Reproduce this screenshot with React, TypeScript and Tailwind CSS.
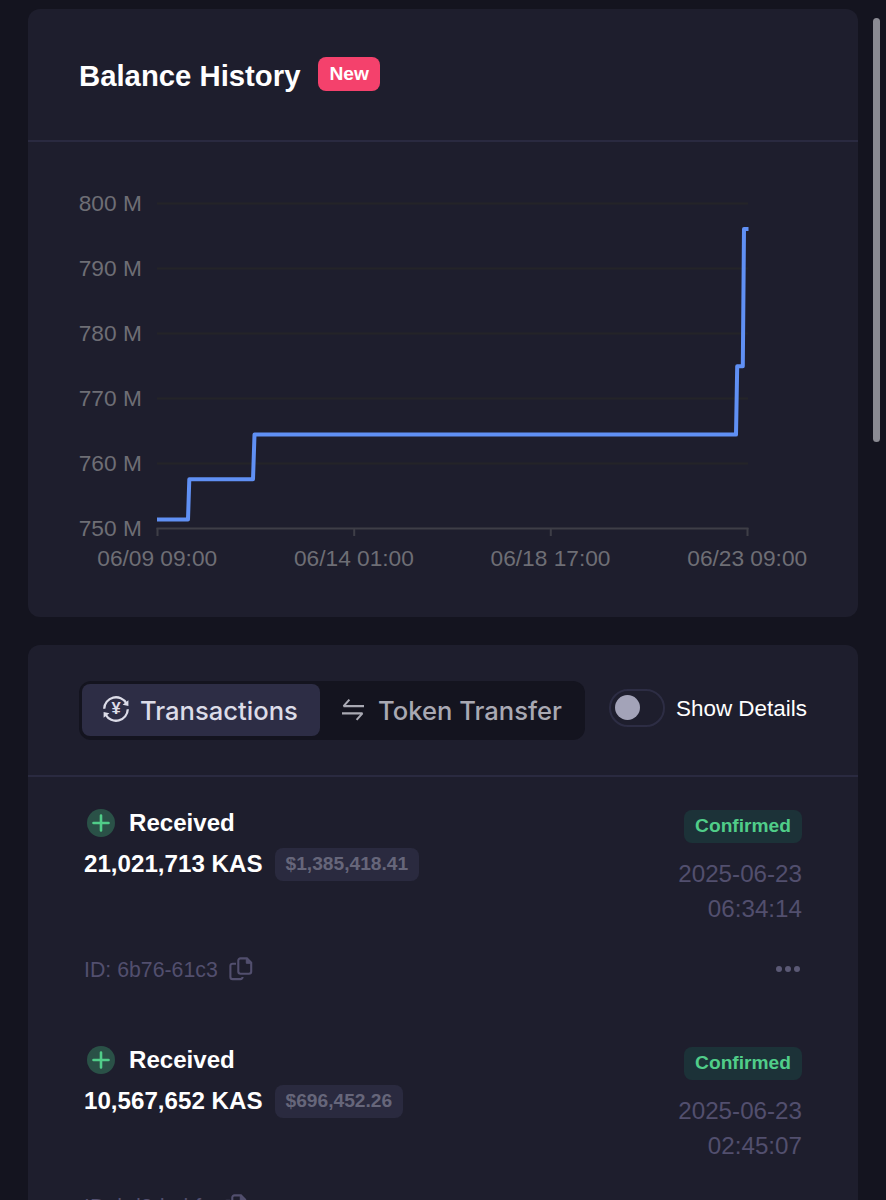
type Transaction = {
  amount: string;
  usd: string;
  date: string;
  time: string;
  id: string;
};

const transactions: Transaction[] = [
  { amount: "21,021,713 KAS", usd: "$1,385,418.41", date: "2025-06-23", time: "06:34:14", id: "6b76-61c3" },
  { amount: "10,567,652 KAS", usd: "$696,452.26", date: "2025-06-23", time: "02:45:07", id: "bd3d-abfc" },
];

const yTicks = [
  { label: "800 M", y: 61 },
  { label: "790 M", y: 126 },
  { label: "780 M", y: 191 },
  { label: "770 M", y: 256 },
  { label: "760 M", y: 321 },
  { label: "750 M", y: 386 },
];

const xTicks = [
  { label: "06/09 09:00", x: 129.5 },
  { label: "06/14 01:00", x: 326.2 },
  { label: "06/18 17:00", x: 522.8 },
  { label: "06/23 09:00", x: 719.5 },
];

function BalanceChart() {
  return (
    <svg width="830" height="475" viewBox="0 0 830 475" className="block" fontFamily="Liberation Sans, sans-serif">
      {yTicks.map(({ label, y }) => (
        <g key={label}>
          {label !== "750 M" && <path d={`M129 ${y + 0.5}H720`} stroke="#242428" strokeWidth="2" />}
          <text x="113.8" y={y + 8.2} textAnchor="end" fontSize="22.7" fill="#6e6e75">
            {label}
          </text>
        </g>
      ))}
      <path d="M128.5 386.5H720.5" stroke="#3e3e47" strokeWidth="2" />
      {xTicks.map(({ label, x }) => (
        <g key={label}>
          <path d={`M${x} 386V394`} stroke="#3e3e47" strokeWidth="2" />
          <text x={x - 0.3} y="424" textAnchor="middle" fontSize="22.7" fill="#6e6e75">
            {label}
          </text>
        </g>
      ))}
      <path
        d="M129 377.4H160L161.3 337.3H225L226.5 292.6H708L709.2 224.2H714.8L716 87H720.5"
        fill="none"
        stroke="#6090f4"
        strokeWidth="4"
        strokeLinejoin="round"
      />
    </svg>
  );
}

function ExchangeIcon() {
  return (
    <svg width="28" height="28" viewBox="0 0 28 28" fill="none" stroke="currentColor" strokeWidth="2.3">
      <path d="M2.2 13.7A11.8 11.8 0 0 1 24.3 8.3M25.8 14.3A11.8 11.8 0 0 1 3.7 19.7" />
      <path d="M26.4 5.2V11L20.6 9.8ZM1.6 22.8V17L7.4 18.2Z" fill="currentColor" stroke="none" />
      <text
        x="14"
        y="19.4"
        textAnchor="middle"
        fontFamily="Liberation Sans, sans-serif"
        fontSize="16.5"
        fontWeight="700"
        fill="currentColor"
        stroke="none"
      >
        ¥
      </text>
    </svg>
  );
}

function TransferIcon() {
  return (
    <svg width="24" height="24" viewBox="0 0 24 24" fill="none" stroke="currentColor" strokeWidth="2.1">
      <path d="M8.4 1.6 2.6 8.1H23M1 15.4H21.4L15.6 21.9" strokeLinejoin="bevel" />
    </svg>
  );
}

function CopyIcon() {
  return (
    <svg width="24" height="24" viewBox="0 0 24 24" fill="none" stroke="currentColor" strokeWidth="2.1">
      <path d="M7 6.7H3.6a2.2 2.2 0 0 0-2.2 2.2v11a2.2 2.2 0 0 0 2.2 2.2h7.8a2.2 2.2 0 0 0 2.2-2.2" />
      <path d="M11.5 1.4h6.4l4.3 4.3v8.8a2.2 2.2 0 0 1-2.2 2.2h-8.5a2.2 2.2 0 0 1-2.2-2.2V3.6a2.2 2.2 0 0 1 2.2-2.2Z" />
      <path d="M17.3 1.8v4.5h4.5Z" fill="currentColor" strokeWidth="1" />
    </svg>
  );
}

function TransactionRow({ tx }: { tx: Transaction }) {
  return (
    <div className="flex h-[237.3px] justify-between pr-14 pl-14">
      <div>
        <div className="flex h-[42px] items-center pl-[3px] text-[24.1px] font-bold text-white">
          <svg width="28" height="28" viewBox="0 0 28 28" className="mr-[14px]">
            <circle cx="14" cy="14" r="14" fill="#2a5147" />
            <path d="M14 6.5v15M6.5 14h15" stroke="#50cd89" strokeWidth="2.6" strokeLinecap="round" />
          </svg>
          Received
        </div>
        <div className="flex h-10 items-center">
          <span className="text-[24.15px] font-bold text-white">{tx.amount}</span>
          <span className="ml-3 flex h-[33px] items-center rounded-lg bg-[#2a2a3f] px-[11px] text-[19.2px] font-bold text-[#66667a]">
            {tx.usd}
          </span>
        </div>
        <div className="mt-[73px] flex h-[27px] items-center text-[#524f6e]">
          <span className="text-[21.3px]">ID: {tx.id}</span>
          <span className="mb-[3px] ml-[11px]">
            <CopyIcon />
          </span>
        </div>
      </div>
      <div className="flex flex-col items-end pt-[8px]">
        <span className="flex h-[33px] items-center rounded-lg bg-[#1c3238] px-[11px] text-[19.2px] font-bold text-[#50cd89]">
          Confirmed
        </span>
        <div className="mt-[13px] text-right text-[24.2px] leading-[35px] text-[#524f6e]">
          <p>{tx.date}</p>
          <p>{tx.time}</p>
        </div>
        <div className="mt-[40px] mr-[2.5px] flex gap-[3px]">
          <i className="size-[5.8px] rounded-full bg-[#5b5975]" />
          <i className="size-[5.8px] rounded-full bg-[#5b5975]" />
          <i className="size-[5.8px] rounded-full bg-[#5b5975]" />
        </div>
      </div>
    </div>
  );
}

export default function App() {
  return (
    <div className="relative h-[1200px] w-[886px] overflow-hidden bg-[#14141f] px-7 pt-[9px] font-['Liberation_Sans',sans-serif] whitespace-nowrap">
      <section className="h-[608px] rounded-xl bg-[#1e1e2d]">
        <header className="flex h-[133px] items-center border-b-2 border-[#2a2a40] pl-[51px]">
          <h1 className="pt-[3px] text-[29.3px] font-bold text-white">Balance History</h1>
          <span className="mb-[1px] ml-[18px] flex h-[34px] items-center rounded-lg bg-[#f4416c] px-[11px] text-[19.2px] font-bold text-white">
            New
          </span>
        </header>
        <BalanceChart />
      </section>

      <section className="mt-7 h-[620px] rounded-xl bg-[#1e1e2d]">
        <header className="flex h-[132px] border-b-2 border-[#2a2a40] pt-[36px] pl-[51px]">
          <div className="flex h-[59px] w-[506px] rounded-xl bg-[#14141f] p-[3px] font-['Inter',sans-serif] text-[25.6px] font-medium">
            <button className="flex h-[52px] w-[238px] items-center rounded-lg bg-[#2d2d45] pl-[20px] text-[#dcdce8]">
              <span className="mb-[2px]">
                <ExchangeIcon />
              </span>
              <span className="ml-[10px] pt-[2px]">Transactions</span>
            </button>
            <button className="flex h-[52px] items-center pl-[21px] text-[#a9a9b3]">
              <TransferIcon />
              <span className="ml-[13px] pt-[2px]">Token Transfer</span>
            </button>
          </div>
          <label className="ml-6 flex h-[53px] items-center">
            <span className="flex h-[38px] w-[56px] items-center rounded-full border-2 border-[#2d2d44] pl-[4px]">
              <span className="size-[25px] rounded-full bg-[#a3a3b8]" />
            </span>
            <span className="ml-[11px] pt-[2px] text-[22.45px] text-white">Show Details</span>
          </label>
        </header>
        <div className="pt-[25px]">
          {transactions.map((tx) => (
            <TransactionRow key={tx.id} tx={tx} />
          ))}
        </div>
      </section>

      {/* Scroll indicator */}
      <div className="absolute top-[18px] left-[873px] h-[424px] w-[7px] rounded-full bg-[#8b8b93]" />
    </div>
  );
}
